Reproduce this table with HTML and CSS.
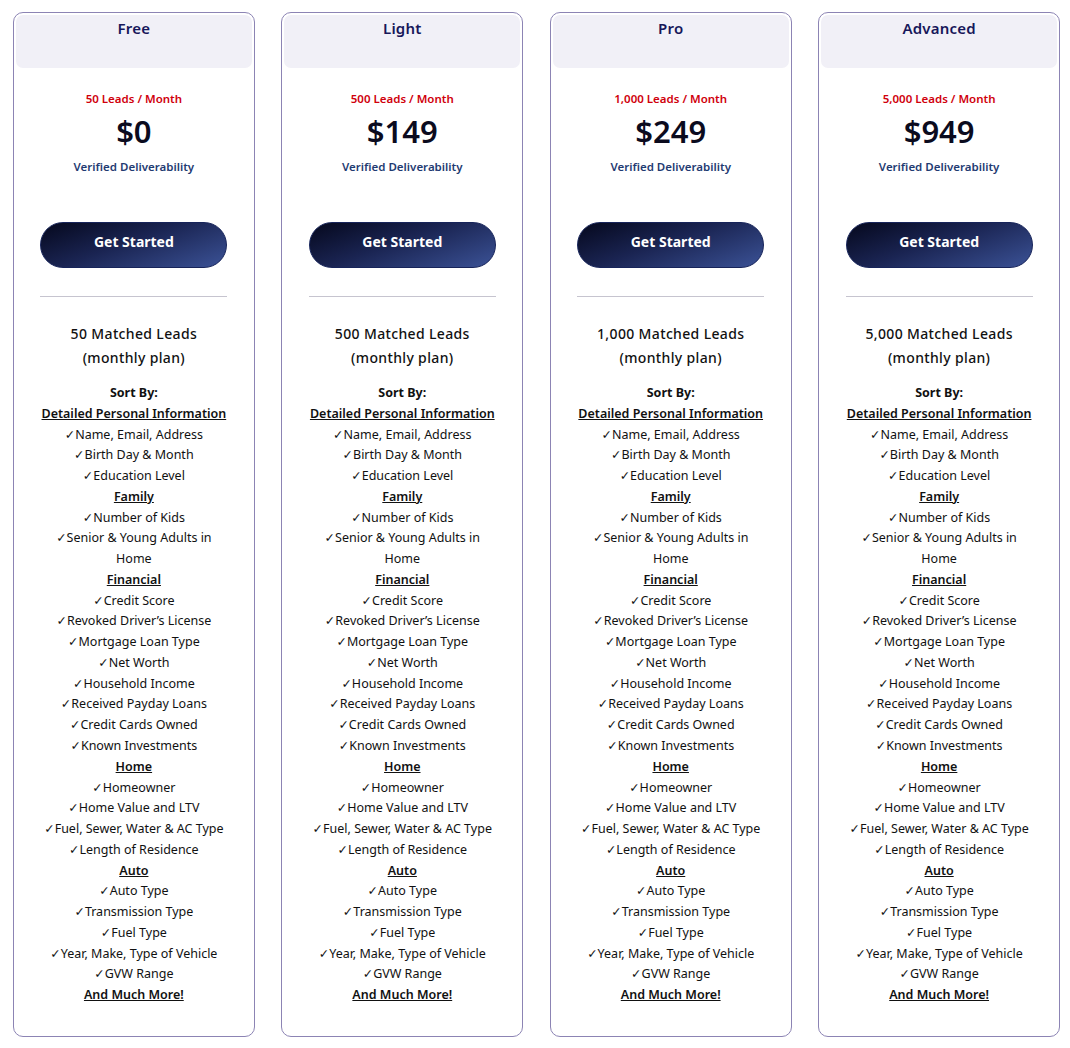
FILE: index.html
```html
<!DOCTYPE html>
<html>
<head>
<meta charset="utf-8">
<link rel="stylesheet" href="styles.css">
</head>
<body>
<main class="plans">
  <section class="card">
    <div class="card-head">Free</div>
    <div class="leads">50 Leads / Month</div>
    <div class="price">$0</div>
    <div class="verified">Verified Deliverability</div>
    <a class="btn">Get Started</a>
    <hr class="sep">
    <div class="matched">50 Matched Leads<br>(monthly plan)</div>
    <div class="features">
      <div class="sort">Sort By:</div>
      <div class="cat">Detailed Personal Information</div>
      <div>✓Name, Email, Address</div>
      <div>✓Birth Day &amp; Month</div>
      <div>✓Education Level</div>
      <div class="cat">Family</div>
      <div>✓Number of Kids</div>
      <div>✓Senior &amp; Young Adults in Home</div>
      <div class="cat">Financial</div>
      <div>✓Credit Score</div>
      <div>✓Revoked Driver’s License</div>
      <div>✓Mortgage Loan Type</div>
      <div>✓Net Worth</div>
      <div>✓Household Income</div>
      <div>✓Received Payday Loans</div>
      <div>✓Credit Cards Owned</div>
      <div>✓Known Investments</div>
      <div class="cat">Home</div>
      <div>✓Homeowner</div>
      <div>✓Home Value and LTV</div>
      <div>✓Fuel, Sewer, Water &amp; AC Type</div>
      <div>✓Length of Residence</div>
      <div class="cat">Auto</div>
      <div>✓Auto Type</div>
      <div>✓Transmission Type</div>
      <div>✓Fuel Type</div>
      <div>✓Year, Make, Type of Vehicle</div>
      <div>✓GVW Range</div>
      <div class="cat">And Much More!</div>
    </div>
  </section>
  <section class="card">
    <div class="card-head">Light</div>
    <div class="leads">500 Leads / Month</div>
    <div class="price">$149</div>
    <div class="verified">Verified Deliverability</div>
    <a class="btn">Get Started</a>
    <hr class="sep">
    <div class="matched">500 Matched Leads<br>(monthly plan)</div>
    <div class="features">
      <div class="sort">Sort By:</div>
      <div class="cat">Detailed Personal Information</div>
      <div>✓Name, Email, Address</div>
      <div>✓Birth Day &amp; Month</div>
      <div>✓Education Level</div>
      <div class="cat">Family</div>
      <div>✓Number of Kids</div>
      <div>✓Senior &amp; Young Adults in Home</div>
      <div class="cat">Financial</div>
      <div>✓Credit Score</div>
      <div>✓Revoked Driver’s License</div>
      <div>✓Mortgage Loan Type</div>
      <div>✓Net Worth</div>
      <div>✓Household Income</div>
      <div>✓Received Payday Loans</div>
      <div>✓Credit Cards Owned</div>
      <div>✓Known Investments</div>
      <div class="cat">Home</div>
      <div>✓Homeowner</div>
      <div>✓Home Value and LTV</div>
      <div>✓Fuel, Sewer, Water &amp; AC Type</div>
      <div>✓Length of Residence</div>
      <div class="cat">Auto</div>
      <div>✓Auto Type</div>
      <div>✓Transmission Type</div>
      <div>✓Fuel Type</div>
      <div>✓Year, Make, Type of Vehicle</div>
      <div>✓GVW Range</div>
      <div class="cat">And Much More!</div>
    </div>
  </section>
  <section class="card">
    <div class="card-head">Pro</div>
    <div class="leads">1,000 Leads / Month</div>
    <div class="price">$249</div>
    <div class="verified">Verified Deliverability</div>
    <a class="btn">Get Started</a>
    <hr class="sep">
    <div class="matched">1,000 Matched Leads<br>(monthly plan)</div>
    <div class="features">
      <div class="sort">Sort By:</div>
      <div class="cat">Detailed Personal Information</div>
      <div>✓Name, Email, Address</div>
      <div>✓Birth Day &amp; Month</div>
      <div>✓Education Level</div>
      <div class="cat">Family</div>
      <div>✓Number of Kids</div>
      <div>✓Senior &amp; Young Adults in Home</div>
      <div class="cat">Financial</div>
      <div>✓Credit Score</div>
      <div>✓Revoked Driver’s License</div>
      <div>✓Mortgage Loan Type</div>
      <div>✓Net Worth</div>
      <div>✓Household Income</div>
      <div>✓Received Payday Loans</div>
      <div>✓Credit Cards Owned</div>
      <div>✓Known Investments</div>
      <div class="cat">Home</div>
      <div>✓Homeowner</div>
      <div>✓Home Value and LTV</div>
      <div>✓Fuel, Sewer, Water &amp; AC Type</div>
      <div>✓Length of Residence</div>
      <div class="cat">Auto</div>
      <div>✓Auto Type</div>
      <div>✓Transmission Type</div>
      <div>✓Fuel Type</div>
      <div>✓Year, Make, Type of Vehicle</div>
      <div>✓GVW Range</div>
      <div class="cat">And Much More!</div>
    </div>
  </section>
  <section class="card">
    <div class="card-head">Advanced</div>
    <div class="leads">5,000 Leads / Month</div>
    <div class="price">$949</div>
    <div class="verified">Verified Deliverability</div>
    <a class="btn">Get Started</a>
    <hr class="sep">
    <div class="matched">5,000 Matched Leads<br>(monthly plan)</div>
    <div class="features">
      <div class="sort">Sort By:</div>
      <div class="cat">Detailed Personal Information</div>
      <div>✓Name, Email, Address</div>
      <div>✓Birth Day &amp; Month</div>
      <div>✓Education Level</div>
      <div class="cat">Family</div>
      <div>✓Number of Kids</div>
      <div>✓Senior &amp; Young Adults in Home</div>
      <div class="cat">Financial</div>
      <div>✓Credit Score</div>
      <div>✓Revoked Driver’s License</div>
      <div>✓Mortgage Loan Type</div>
      <div>✓Net Worth</div>
      <div>✓Household Income</div>
      <div>✓Received Payday Loans</div>
      <div>✓Credit Cards Owned</div>
      <div>✓Known Investments</div>
      <div class="cat">Home</div>
      <div>✓Homeowner</div>
      <div>✓Home Value and LTV</div>
      <div>✓Fuel, Sewer, Water &amp; AC Type</div>
      <div>✓Length of Residence</div>
      <div class="cat">Auto</div>
      <div>✓Auto Type</div>
      <div>✓Transmission Type</div>
      <div>✓Fuel Type</div>
      <div>✓Year, Make, Type of Vehicle</div>
      <div>✓GVW Range</div>
      <div class="cat">And Much More!</div>
    </div>
  </section>
</main>
</body>
</html>
```

FILE: styles.css
```css
html, body {
  margin: 0;
  padding: 0;
  background: #ffffff;
}
body {
  font-family: "Noto Sans", "Open Sans", "DejaVu Sans", sans-serif;
  color: #111;
}
.plans {
  display: flex;
  gap: 26.7px;
  padding: 12px 10px 0 13px;
}
.card {
  box-sizing: border-box;
  width: 242px;
  height: 1025px;
  border: 1.5px solid #8c84b4;
  border-radius: 10px;
  padding: 2px 2px 0;
  display: flex;
  flex-direction: column;
  align-items: center;
  text-align: center;
}
.card-head {
  align-self: stretch;
  height: 53px;
  background: #f1f0f7;
  border-radius: 7px;
  font-size: 15px;
  font-weight: 600;
  color: #17175a;
  line-height: 27px;
  letter-spacing: 0.2px;
}
.leads {
  margin-top: 21px;
  font-size: 11.5px;
  font-weight: 600;
  color: #d0000c;
  line-height: 20px;
}
.price {
  font-size: 31px;
  font-weight: 600;
  color: #0b0b1e;
  line-height: 45px;
}
.verified {
  font-size: 11.5px;
  font-weight: 600;
  color: #1f3b72;
  line-height: 20px;
  margin-top: 3px;
}
.btn {
  margin-top: 45px;
  width: 187px;
  height: 46px;
  box-sizing: border-box;
  border-radius: 23px;
  border: 1px solid #17245a;
  background: linear-gradient(160deg, #05081d 0%, #1a2452 45%, #3b5296 100%);
  color: #fff;
  font-size: 14px;
  font-weight: 700;
  line-height: 37px;
  display: block;
}
.sep {
  width: 187px;
  margin: 28px 0 0;
  border: 0;
  border-top: 1px solid #c6c4cf;
}
.matched {
  margin-top: 25px;
  font-size: 14px;
  line-height: 24px;
  font-weight: 500;
  color: #111;
  letter-spacing: 0.35px;
}
.features {
  margin-top: 13px;
  width: 187px;
  font-size: 12.5px;
  line-height: 20.76px;
  color: #111;
}
.sort {
  font-weight: 700;
}
.cat {
  font-weight: 600;
  text-decoration: underline;
  white-space: nowrap;
}
```
